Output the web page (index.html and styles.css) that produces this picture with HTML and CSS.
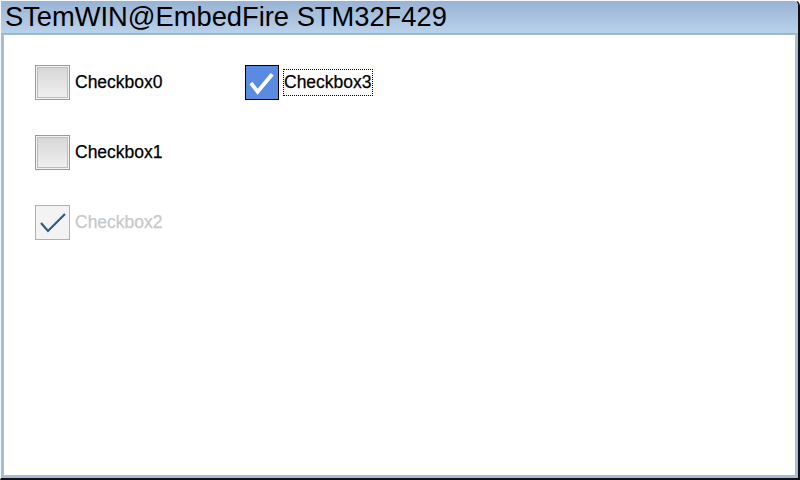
FILE: index.html
```html
<!DOCTYPE html>
<html>
<head>
<meta charset="utf-8">
<link rel="stylesheet" href="styles.css">
</head>
<body>
<div class="frame">
  <div class="blue">
    <div class="title">STemWIN@EmbedFire STM32F429</div>
    <div class="client">
      <div class="grid">
        <div class="col">
          <div class="cb"><span class="box"></span><span class="label">Checkbox0</span></div>
          <div class="cb"><span class="box"></span><span class="label">Checkbox1</span></div>
          <div class="cb disabled"><span class="box"><svg width="33" height="33" viewBox="0 0 33 33"><path d="M5 17 L12 25 L29 8" fill="none" stroke="#2e5b86" stroke-width="2.2"/></svg></span><span class="label">Checkbox2</span></div>
        </div>
        <div class="col">
          <div class="cb checked"><span class="box"><svg width="33" height="33" viewBox="0 0 33 33"><path d="M5 17 L12 26 L27 8" fill="none" stroke="#fff" stroke-width="4"/></svg></span><span class="label focus">Checkbox3</span></div>
        </div>
      </div>
    </div>
  </div>
</div>
</body>
</html>
```
FILE: styles.css
```css
html, body { margin: 0; padding: 0; }
body { width: 800px; height: 480px; overflow: hidden; background: #fff; font-family: "Liberation Sans", Arial, sans-serif; }
.frame {
  width: 800px; height: 480px; box-sizing: border-box;
  border-top: 1px solid #f4f7fb; border-left: 1px solid #f4f7fb;
  border-right: 2px solid #111; border-bottom: 2px solid #111;
  border-top-right-radius: 6px;
}
.blue {
  height: 100%; box-sizing: border-box;
  background: #a3bcd8;
  padding: 0 3px 3px 3px;
  display: flex; flex-direction: column;
  border-top-right-radius: 5px;
}
.title {
  height: 33px; margin: 0 -3px; padding-left: 4px;
  background: linear-gradient(#98b3d3, #bad1ea);
  border-bottom: 1px solid #9ab3d2;
  font-size: 27.3px; line-height: 32px; color: #000;
  box-sizing: border-box;
  border-top-right-radius: 5px;
  white-space: nowrap;
}
.client { flex: 1; background: #fff; margin-top: 1px; }
.grid { display: flex; padding: 30px 0 0 31px; }
.col { display: flex; flex-direction: column; gap: 35px; width: 210px; }
.cb { display: flex; align-items: center; height: 35px; }
.box {
  width: 35px; height: 35px; box-sizing: border-box; flex: none;
  border: 1px solid #9a9a9a;
  box-shadow: inset 0 0 0 1px #f4f4f4, inset 0 0 0 2px #bdbdbd;
  background: linear-gradient(#d6d6d6, #f0f0f0);
  display: flex; align-items: center; justify-content: center;
}
.label { margin-left: 5px; font-size: 17.5px; color: #000; white-space: nowrap; -webkit-text-stroke: 0.25px currentColor; }
.disabled .box { background: #f3f3f3; border-color: #b0b0b0; box-shadow: none; }
.disabled .label { color: #c8c8c8; }
.checked .box { width: 34px; background: #5a8be2; border: 1px solid #000; box-shadow: none; }
.focus { outline: 1px dotted #000; outline-offset: 0; padding: 2px 0; margin-left: 5px; }
```
